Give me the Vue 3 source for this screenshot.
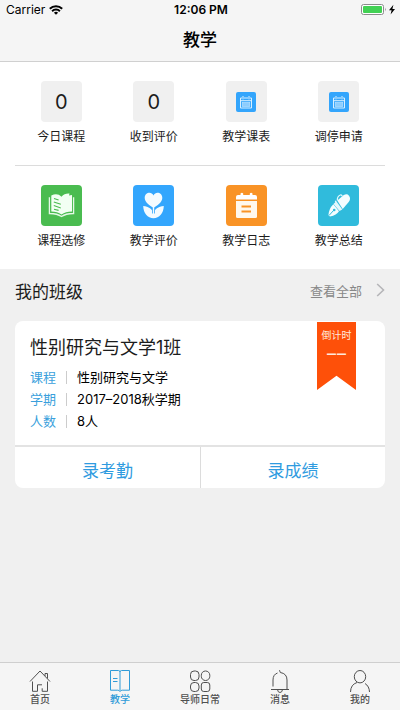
<script setup>
const counters = [
  { label: '今日课程', value: 0 },
  { label: '收到评价', value: 0 },
  { label: '教学课表', value: null },
  { label: '调停申请', value: null },
]

const tools = [
  { label: '课程选修', icon: 'book' },
  { label: '教学评价', icon: 'flower' },
  { label: '教学日志', icon: 'calendar' },
  { label: '教学总结', icon: 'pen' },
]

const details = [
  { name: '课程', value: '性别研究与文学' },
  { name: '学期', value: '2017–2018秋学期' },
  { name: '人数', value: '8人' },
]

const tabs = [
  { label: '首页', icon: 'home' },
  { label: '教学', icon: 'teach' },
  { label: '导师日常', icon: 'grid' },
  { label: '消息', icon: 'bell' },
  { label: '我的', icon: 'user' },
]
const current = '教学'
</script>

<template>
  <div class="page">
    <header class="top">
      <div class="status">
        <div class="carrier">
          <span>Carrier</span>
          <svg width="14" height="10" viewBox="0 0 14 10" fill="none" stroke="#000" stroke-width="2">
            <path d="M.8 3.8a8.8 8.8 0 0 1 12.4 0" />
            <path d="M3.1 6.2a5.5 5.5 0 0 1 7.8 0" />
            <path d="M7 9.8 4.9 7.7a3 3 0 0 1 4.2 0z" fill="#000" stroke="none" />
          </svg>
        </div>
        <time class="clock">12:06 PM</time>
        <div class="power">
          <svg width="35" height="12" viewBox="0 0 35 12">
            <rect x=".5" y=".5" width="22" height="10" rx="2" fill="#fff" stroke="#8b8b8b" />
            <rect x="2" y="2" width="19" height="7" rx="1" fill="#42d154" />
            <path d="M24 3.8q1.6 1.7 0 3.4z" fill="#8b8b8b" />
            <path d="M32.4.8 28 6.3h2.6l-1 4.2L34 4.9h-2.6z" fill="#000" />
          </svg>
        </div>
      </div>
      <h1 class="title">教学</h1>
    </header>

    <main class="content">
      <section class="panel">
        <div class="row">
          <button v-for="item in counters" :key="item.label" type="button" class="entry">
            <span class="tile">
              <template v-if="item.value !== null">{{ item.value }}</template>
              <svg v-else width="20" height="20" viewBox="0 0 20 20">
                <rect width="20" height="20" rx="2" fill="#33a5fc" />
                <g fill="none" stroke="#d9f0ff" stroke-width="1">
                  <path d="M6 6H4.5v10h11V6H14M8 6h4M4.5 8.7h11M7 4v3.4M13 4v3.4" />
                </g>
                <rect x="6.2" y="10.5" width="7.6" height="4" fill="#8dcdfd" stroke="#c4e6ff" stroke-width=".6" />
              </svg>
            </span>
            <span class="caption">{{ item.label }}</span>
          </button>
        </div>
        <hr class="rule" />
        <div class="row">
          <button v-for="item in tools" :key="item.label" type="button" class="entry">
            <span class="tile" :class="item.icon">
              <svg v-if="item.icon === 'book'" width="41" height="41" viewBox="0 0 41 41" fill="none">
                <path d="M8.400 12.200v16.300q7.600-.1 12.100 3 4.500-3.100 12.100-3V12.200" stroke="#e5f8e7" stroke-width="1.300" />
                <path d="M10.300 10.500q6.200-2.800 10.200 1.300 3-3.600 8-3.200l-.5 2 3-.6v16.500q-6.500.1-10.500 3-4-2.900-10.200-3z" fill="#f2fff3" />
                <path d="m13 13.400 4.600 1.500M12.800 17l7 2.300M12.800 20.600l7 2.300M13 24.300l4.600 1.100" stroke="#4abc50" stroke-width="1.100" />
              </svg>
              <svg v-else-if="item.icon === 'flower'" width="41" height="41" viewBox="0 0 41 41">
                <path d="M20.500 22.800C17 20.600 11.700 17.400 11.700 13c0-5.600 6.700-7 8.800-2.600C22.600 6 29.300 7.400 29.300 13c0 4.400-5.300 7.600-8.800 9.800z" fill="#f4fbff" />
                <path d="M10.200 21c5.500.7 9.200 3.300 10.300 7 1.100-3.700 4.800-6.300 10.300-7-.2 7.300-4.400 12.200-10.300 12.200S10.400 28.300 10.200 21z" fill="#f4fbff" />
                <path d="M20.500 24.500v4" stroke="#33a6fd" stroke-width="3" />
                <path d="M20.500 22v8" stroke="#f4fbff" stroke-width="1.400" />
              </svg>
              <svg v-else-if="item.icon === 'calendar'" width="41" height="41" viewBox="0 0 41 41">
                <path d="M10 14.500V12q0-2 2-2h2.500V8.500q1.500-1.300 2.700 0V10h6.600V8.500q1.300-1.300 2.700 0V10H29q2 0 2 2v2.500z" fill="#fff" />
                <path d="M10 16h21v15.500q0 1.500-1.500 1.500h-18q-1.500 0-1.500-1.500z" fill="#fff8ee" />
                <path d="M15.500 21.500H25M15.500 26.500H25" stroke="#f99326" stroke-width="1.800" />
              </svg>
              <svg v-else width="41" height="41" viewBox="0 0 41 41">
                <path d="m19.300 15.500 6.200-5.300q3.500-2.200 5.500.5 2.200 3-.3 6.300l-6 7z" fill="#f4fdff" />
                <path d="m18.300 16.200 6 8.200-2.800 1.700-6-7.200z" fill="#e4f8fc" />
                <path d="m15.300 19.300 5.700 7q-2.300 4-9 5.200l-1.600-1.300q.5-6.500 4.900-10.900z" fill="#f4fdff" />
                <path d="m11 30.500 4.700-5.200" stroke="#30bbdc" stroke-width="1" />
                <circle cx="16.200" cy="25" r="1.300" fill="#30bbdc" />
                <path d="M19.300 15.500q-.2-4.300 3-5.500 2-.4 1.400 1.200M18 17.500l-.7-1.700" fill="none" stroke="#e5f9fd" stroke-width="1.200" />
              </svg>
            </span>
            <span class="caption">{{ item.label }}</span>
          </button>
        </div>
      </section>

      <section class="classes">
        <div class="heading">
          <h2 class="heading-title">我的班级</h2>
          <a class="more" href="#">
            <span>查看全部</span>
            <svg width="9" height="14" viewBox="0 0 9 14" fill="none" stroke="#b5b5b8" stroke-width="1.600">
              <path d="m1.200 1 6.300 6-6.300 6" />
            </svg>
          </a>
        </div>

        <article class="card">
          <div class="info">
            <div class="summary">
              <h3 class="name">性别研究与文学1班</h3>
              <dl class="details">
                <div v-for="d in details" :key="d.name" class="detail">
                  <dt>{{ d.name }}</dt>
                  <dd>{{ d.value }}</dd>
                </div>
              </dl>
            </div>
            <div class="ribbon">
              <span>倒计时</span>
              <span class="count"><span>–</span><span>–</span></span>
            </div>
          </div>
          <div class="actions">
            <button type="button">录考勤</button>
            <button type="button">录成绩</button>
          </div>
        </article>
      </section>
    </main>

    <nav class="tabs">
      <a v-for="t in tabs" :key="t.label" href="#" class="tab" :class="{ active: t.label === current }">
        <svg width="24" height="24" viewBox="0 0 24 24" fill="none" stroke="currentColor" stroke-width="1">
          <template v-if="t.icon === 'home'">
            <path d="M2 12.500 12 2l10 10.500M17 7V4.500h2.500v5M4.500 12.500v9.800h5v-6.500h4.500M19.500 12.500v9.800h-5.300v-3" />
          </template>
          <template v-else-if="t.icon === 'teach'">
            <path d="M2.500 1.500h8q1.500 0 1.500 1.500 0-1.500 1.500-1.500h8v19.700h-7.300q-1.200 0-2.200 1.300-1-1.300-2.200-1.300H2.500zM12 3v18.500M5 9.500h4.500M5 12.500h4.500" />
          </template>
          <template v-else-if="t.icon === 'grid'">
            <rect x="2.500" y="2" width="8.500" height="9.500" rx="3.500" />
            <rect x="13.300" y="2" width="8.500" height="9.500" rx="4.200" />
            <rect x="2.500" y="13.500" width="8.500" height="9" rx="3.500" />
            <rect x="13.300" y="13.500" width="8.500" height="9" rx="2.500" />
          </template>
          <template v-else-if="t.icon === 'bell'">
            <path d="M11.500 1.200l.8 2.300M5 17.500V11q0-5.500 4.500-7M12.300 3.500Q19 4.500 19 11v9M3 20.500h18M9.500 20.500q.3 3 2.500 3t2.500-3" />
          </template>
          <template v-else>
            <ellipse cx="12" cy="7.700" rx="5.700" ry="6.200" />
            <path d="M2.500 23q.2-7.500 6.500-9.500M17 14.500q4.300 2.700 4.500 8.500" />
          </template>
        </svg>
        <span>{{ t.label }}</span>
      </a>
    </nav>
  </div>
</template>

<style>
body {
  margin: 0;
  background: #f0f0f0;
}
</style>

<style scoped>
.page {
  display: flex;
  flex-direction: column;
  min-height: 100vh;
  color: #1c1c1c;
  background: #f0f0f0;
  font-family: Inter, "Noto Sans CJK SC", sans-serif;
  font-size: 13px;
}

button {
  padding: 0;
  border: 0;
  background: none;
  color: inherit;
  font: inherit;
}

a {
  color: inherit;
  text-decoration: none;
}

h1,
h2,
h3,
dl,
dd {
  margin: 0;
  font-weight: 400;
}

.top {
  border-bottom: 1px solid #d0d0d0;
  background: #f5f5f5;
}

.status {
  display: grid;
  grid-template-columns: 1fr auto 1fr;
  align-items: center;
  height: 20px;
  padding: 0 4px 0 6px;
  font-size: 12px;
  line-height: 20px;
  color: #000;
}

.carrier {
  display: flex;
  align-items: center;
  gap: 4px;
}

.clock {
  font-weight: 600;
}

.power {
  display: flex;
  justify-content: flex-end;
}

.title {
  line-height: 41px;
  font-size: 17px;
  font-weight: 500;
  text-align: center;
  color: #000;
}

.content {
  flex: 1;
}

.panel {
  padding: 19px 15px 18px;
  background: #fff;
}

.row {
  display: grid;
  grid-template-columns: repeat(4, 1fr);
}

.entry {
  display: flex;
  flex-direction: column;
  align-items: center;
  gap: 5px;
}

.tile {
  display: flex;
  align-items: center;
  justify-content: center;
  width: 41px;
  height: 41px;
  border-radius: 4px;
  background: #f0f0f0;
  font-size: 20px;
}

.book {
  background: #4abc50;
}

.flower {
  background: #33a6fd;
}

.calendar {
  background: #f99326;
}

.pen {
  background: #30bbdc;
}

.caption {
  font-size: 12px;
  line-height: 20px;
}

.rule {
  height: 1px;
  margin: 18px 0 19px;
  border: 0;
  background: #dcdcdc;
}

.classes {
  padding: 0 15px 15px;
}

.heading {
  display: flex;
  align-items: center;
  justify-content: space-between;
  height: 52px;
  padding-bottom: 10px;
  box-sizing: border-box;
}

.heading-title {
  font-size: 17px;
}

.more {
  display: flex;
  align-items: center;
  gap: 14px;
  color: #888;
}

.card {
  overflow: hidden;
  border-radius: 8px;
  background: #fff;
}

.info {
  display: flex;
  justify-content: space-between;
  align-items: flex-start;
  padding: 0 29px 13px 15px;
}

.summary {
  padding-top: 14px;
}

.name {
  margin-bottom: 5px;
  font-size: 18px;
  line-height: 26px;
}

.detail {
  display: flex;
  align-items: center;
  line-height: 22px;
}

.detail dt {
  color: #3a9fdc;
}

.detail dd {
  display: flex;
  align-items: center;
  color: #000;
}

.detail dd::before {
  content: "";
  width: 1px;
  height: 13px;
  margin: 0 10px;
  background: #ccc;
}

.ribbon {
  display: flex;
  flex-direction: column;
  align-items: center;
  width: 39px;
  height: 68px;
  padding-top: 4px;
  box-sizing: border-box;
  margin-top: 1px;
  background: #fe5009;
  clip-path: polygon(0 0, 100% 0, 100% 100%, 50% 79%, 0 100%);
  color: #ffe9dd;
  font-size: 10px;
  line-height: 18px;
}

.count {
  display: flex;
  gap: 1px;
  font-size: 18px;
  line-height: 20px;
}

.actions {
  display: grid;
  grid-template-columns: 1fr 1fr;
  border-top: 2px solid #e3e3e3;
}

.actions button {
  height: 41px;
  padding-top: 4px;
  color: #2f9be0;
  font-size: 17px;
}

.actions button + button {
  border-left: 1px solid #dcdcdc;
}

.tabs {
  display: grid;
  grid-template-columns: repeat(5, 1fr);
  height: 47px;
  border-top: 1px solid #cfcfcf;
  background: #f5f5f5;
}

.tab {
  display: flex;
  flex-direction: column;
  align-items: center;
  padding-top: 6px;
  color: #505050;
  font-size: 10px;
  line-height: 13px;
  font-weight: 500;
}

.tab.active {
  color: #2f9bd8;
}
</style>
